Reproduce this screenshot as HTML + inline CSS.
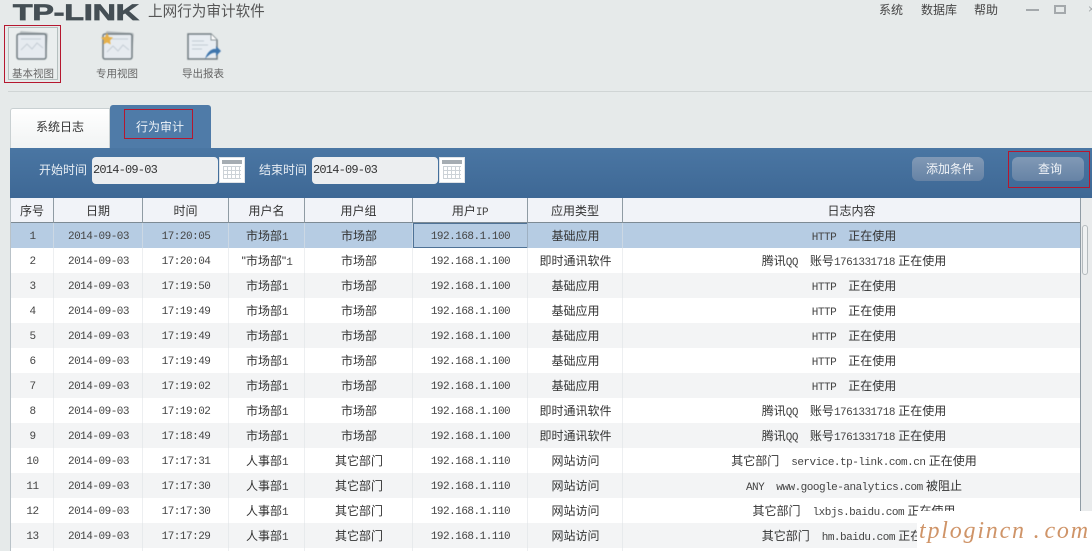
<!DOCTYPE html>
<html lang="zh"><head><meta charset="utf-8">
<style>
html,body{margin:0;padding:0}
body{width:1092px;height:551px;overflow:hidden;background:#e6eaea;position:relative;font-family:"Liberation Sans","Noto Sans CJK SC",sans-serif;font-size:12px;color:#3a3a3a}
.a{position:absolute}
.t{position:absolute;white-space:nowrap;line-height:14px}
.redb{position:absolute;border:1px solid #b5172f;box-sizing:border-box}
.lb{color:#666;font-size:10.500px;text-align:center;width:70px}
table{position:absolute;left:11px;top:198px;width:1069px;border-collapse:separate;border-spacing:0;table-layout:fixed;font-size:12px;background:#fff}
th{height:25px;padding:0;font-weight:400;background:#f1f3f8;border-right:1px solid #8f9ba4;border-bottom:1px solid #7d8a94;color:#333;text-align:center;box-sizing:border-box}
th:last-child{border-right:0}
td{height:25px;padding:0;text-align:center;box-sizing:border-box;white-space:nowrap;overflow:hidden;color:#333}
td.m{padding-top:2px}
td:last-child{padding-left:5px}
tr.g td{background:#f3f4f5}
tr.w td{background:#fff}
tr.s td{background:#b6cce3}
tr.s td.ip{box-shadow:inset 0 0 0 1px #4f7296}
.m{font-family:"Liberation Mono",monospace;font-size:11px;letter-spacing:-.5px;color:#444}
.gap{display:inline-block;width:12px}
.cal{position:absolute;width:26px;height:26px;background:#fff;box-sizing:border-box;border:1px solid #dfe3e7}
.cal i{display:block;position:absolute;left:2px;right:2px;top:2px;height:4px;background:#a6adb3}
.cal b{display:block;position:absolute;left:3px;right:3px;top:8px;bottom:3px;background-image:linear-gradient(#ccd2d7 1px,transparent 1px),linear-gradient(90deg,#ccd2d7 1px,transparent 1px);background-size:4px 4px}
.inp{position:absolute;width:126px;height:27px;border-radius:4px;background:#eceef0;font-family:"Liberation Mono",monospace;font-size:12px;line-height:27px;padding-left:1px;box-sizing:border-box;color:#333;letter-spacing:-.8px}
.btn{position:absolute;width:72px;height:24px;border-radius:6px;background:linear-gradient(#8199b6,#6683a5);color:#f1f4f8;text-align:center;line-height:24px;font-size:12px;box-sizing:border-box}
</style></head><body>

<div class="t" style="left:13px;top:2px;font:900 22px/22px 'Liberation Sans',sans-serif;color:#454f55;-webkit-text-stroke:.8px #454f55;transform:scaleX(1.45);transform-origin:left top">TP-LINK</div>
<div class="t" style="left:148px;top:5px;font-size:14.600px;color:#555">上网行为审计软件</div>

<div class="t" style="left:879px;top:3px;color:#444">系统</div>
<div class="t" style="left:921px;top:3px;color:#444">数据库</div>
<div class="t" style="left:974px;top:3px;color:#444">帮助</div>
<div class="a" style="left:1026px;top:9px;width:13px;height:2px;background:#a4a9ac"></div>
<div class="a" style="left:1054px;top:5px;width:12px;height:9px;border:2px solid #a4a9ac;box-sizing:border-box;background:#e6eaea"></div>
<div class="t" style="left:1088px;top:2px;color:#a4a9ac">×</div>

<div class="redb" style="left:4px;top:25px;width:57px;height:58px"></div>
<div class="a" style="left:8px;top:27px;width:50px;height:53px;border:1px solid #b5c0bf;box-sizing:border-box;background:#eaeeee"></div>

<svg class="a" style="left:0;top:0;filter:blur(.5px)" width="240" height="70">
<g>
<rect x="19" y="32" width="28" height="25" rx="2" fill="#b4babd" transform="rotate(4 33 45)"/>
<rect x="17" y="34" width="29" height="25" rx="2" fill="#e6ebf0" stroke="#727d82" stroke-width="1.500"/>
<path d="M21 50 L27 44 L32 49 L37 43 L43 48" stroke="#c6ced6" fill="none"/>
<path d="M21 39h20" stroke="#c6ced6"/>
</g>
<g>
<rect x="105" y="32" width="28" height="25" rx="2" fill="#b4babd" transform="rotate(4 119 45)"/>
<rect x="103" y="34" width="29" height="25" rx="2" fill="#e6ebf0" stroke="#727d82" stroke-width="1.500"/>
<path d="M107 52 L113 46 L118 51 L123 45 L129 50" stroke="#c6ced6" fill="none"/>
<path d="M112 39h16" stroke="#c6ced6"/>
<path d="M107 33l2 4 4 .5-3 3 .7 4-3.700-2-3.700 2 .7-4-3-3 4-.5z" fill="#e6b04a"/>
</g>
<g>
<path d="M188 34h23l6 6v19h-29z" fill="#e8edf2" stroke="#727d82" stroke-width="1.500"/>
<path d="M211 34v6h6" fill="#fff" stroke="#8f989c"/>
<path d="M192 41h12M192 45h16M192 49h10" stroke="#c3ccd5"/>
<path d="M205 59c2-7 7-11 11-10v-3l5 5-5 5v-3c-4-1-7 2-11 6z" fill="#3f76ad"/>
</g>
</svg>
<div class="t lb" style="left:-2px;top:67px">基本视图</div>
<div class="t lb" style="left:82px;top:67px">专用视图</div>
<div class="t lb" style="left:168px;top:67px">导出报表</div>

<div class="a" style="left:8px;top:91px;width:1084px;height:1px;background:#d0d5d5"></div>

<div class="a" style="left:10px;top:108px;width:100px;height:40px;background:linear-gradient(#fff,#f1f3f3);border:1px solid #c9d0d2;border-bottom:0;box-sizing:border-box;border-radius:3px 0 0 0"></div>
<div class="t" style="left:36px;top:120px;color:#333">系统日志</div>
<div class="a" style="left:110px;top:105px;width:101px;height:44px;background:#4f7ba8;border-radius:3px 3px 0 0"></div>
<div class="redb" style="left:124px;top:109px;width:69px;height:30px"></div>
<div class="t" style="left:136px;top:120px;color:#eef3f8">行为审计</div>

<div class="a" style="left:10px;top:148px;width:1082px;height:50px;background:linear-gradient(#4a76a3,#3e6895)"></div>
<div class="t" style="left:39px;top:163px;color:#e8eef4">开始时间</div>
<div class="inp" style="left:92px;top:157px">2014-09-03</div>
<div class="cal" style="left:219px;top:157px"><i></i><b></b></div>
<div class="t" style="left:259px;top:163px;color:#e8eef4">结束时间</div>
<div class="inp" style="left:312px;top:157px">2014-09-03</div>
<div class="cal" style="left:439px;top:157px"><i></i><b></b></div>
<div class="btn" style="left:912px;top:157px;padding-left:4px">添加条件</div>
<div class="btn" style="left:1012px;top:157px;padding-left:4px">查询</div>
<div class="redb" style="left:1008px;top:151px;width:82px;height:37px"></div>

<div class="a" style="left:10px;top:198px;width:1px;height:353px;background:#b9c2c8"></div>
<div class="a" style="left:11px;top:548px;width:1069px;height:3px;background:#fff"></div>
<table>
<colgroup><col style="width:43px"><col style="width:89px"><col style="width:86px"><col style="width:76px"><col style="width:108px"><col style="width:115px"><col style="width:95px"><col></colgroup>
<tr><th>序号</th><th>日期</th><th>时间</th><th>用户名</th><th>用户组</th><th>用户<span class="m">IP</span></th><th>应用类型</th><th>日志内容</th></tr>
<tr class="s"><td class="m">1</td><td class="m">2014-09-03</td><td class="m">17:20:05</td><td>市场部<span class="m">1</span></td><td>市场部</td><td class="m ip">192.168.1.100</td><td>基础应用</td><td><span class="m">HTTP</span><span class="gap"></span>正在使用</td></tr>
<tr class="w"><td class="m">2</td><td class="m">2014-09-03</td><td class="m">17:20:04</td><td>"市场部"<span class="m">1</span></td><td>市场部</td><td class="m">192.168.1.100</td><td>即时通讯软件</td><td>腾讯<span class="m">QQ</span><span class="gap"></span>账号<span class="m">1761331718</span> 正在使用</td></tr>
<tr class="g"><td class="m">3</td><td class="m">2014-09-03</td><td class="m">17:19:50</td><td>市场部<span class="m">1</span></td><td>市场部</td><td class="m">192.168.1.100</td><td>基础应用</td><td><span class="m">HTTP</span><span class="gap"></span>正在使用</td></tr>
<tr class="w"><td class="m">4</td><td class="m">2014-09-03</td><td class="m">17:19:49</td><td>市场部<span class="m">1</span></td><td>市场部</td><td class="m">192.168.1.100</td><td>基础应用</td><td><span class="m">HTTP</span><span class="gap"></span>正在使用</td></tr>
<tr class="g"><td class="m">5</td><td class="m">2014-09-03</td><td class="m">17:19:49</td><td>市场部<span class="m">1</span></td><td>市场部</td><td class="m">192.168.1.100</td><td>基础应用</td><td><span class="m">HTTP</span><span class="gap"></span>正在使用</td></tr>
<tr class="w"><td class="m">6</td><td class="m">2014-09-03</td><td class="m">17:19:49</td><td>市场部<span class="m">1</span></td><td>市场部</td><td class="m">192.168.1.100</td><td>基础应用</td><td><span class="m">HTTP</span><span class="gap"></span>正在使用</td></tr>
<tr class="g"><td class="m">7</td><td class="m">2014-09-03</td><td class="m">17:19:02</td><td>市场部<span class="m">1</span></td><td>市场部</td><td class="m">192.168.1.100</td><td>基础应用</td><td><span class="m">HTTP</span><span class="gap"></span>正在使用</td></tr>
<tr class="w"><td class="m">8</td><td class="m">2014-09-03</td><td class="m">17:19:02</td><td>市场部<span class="m">1</span></td><td>市场部</td><td class="m">192.168.1.100</td><td>即时通讯软件</td><td>腾讯<span class="m">QQ</span><span class="gap"></span>账号<span class="m">1761331718</span> 正在使用</td></tr>
<tr class="g"><td class="m">9</td><td class="m">2014-09-03</td><td class="m">17:18:49</td><td>市场部<span class="m">1</span></td><td>市场部</td><td class="m">192.168.1.100</td><td>即时通讯软件</td><td>腾讯<span class="m">QQ</span><span class="gap"></span>账号<span class="m">1761331718</span> 正在使用</td></tr>
<tr class="w"><td class="m">10</td><td class="m">2014-09-03</td><td class="m">17:17:31</td><td>人事部<span class="m">1</span></td><td>其它部门</td><td class="m">192.168.1.110</td><td>网站访问</td><td>其它部门<span class="gap"></span><span class="m">service.tp-link.com.cn</span> 正在使用</td></tr>
<tr class="g"><td class="m">11</td><td class="m">2014-09-03</td><td class="m">17:17:30</td><td>人事部<span class="m">1</span></td><td>其它部门</td><td class="m">192.168.1.110</td><td>网站访问</td><td><span class="m">ANY</span><span class="gap"></span><span class="m">www.google-analytics.com</span> 被阻止</td></tr>
<tr class="w"><td class="m">12</td><td class="m">2014-09-03</td><td class="m">17:17:30</td><td>人事部<span class="m">1</span></td><td>其它部门</td><td class="m">192.168.1.110</td><td>网站访问</td><td>其它部门<span class="gap"></span><span class="m">lxbjs.baidu.com</span> 正在使用</td></tr>
<tr class="g"><td class="m">13</td><td class="m">2014-09-03</td><td class="m">17:17:29</td><td>人事部<span class="m">1</span></td><td>其它部门</td><td class="m">192.168.1.110</td><td>网站访问</td><td>其它部门<span class="gap"></span><span class="m">hm.baidu.com</span> 正在使用</td></tr>
</table>

<svg class="a" style="left:0;top:198px" width="1092" height="353">
<path d="M53.500 25V353M142.500 25V353M228.500 25V353M304.500 25V353M412.500 25V353M527.500 25V353M622.500 25V353" stroke="#dfe3e6" opacity=".55"/>
</svg>

<div class="a" style="left:1080px;top:198px;width:12px;height:353px;background:#e9ebec;border-left:1px solid #8f9ba4;box-sizing:border-box"></div>
<div class="a" style="left:1082px;top:225px;width:6px;height:50px;border:1px solid #b4babd;border-radius:4px;box-sizing:border-box;background:#eff1f2"></div>

<div class="a" style="left:917px;top:511px;width:175px;height:40px;background:#fff"></div>
<div class="t" style="left:919px;top:516px;font:italic 24px/30px 'Liberation Serif',serif;color:#cf9468;letter-spacing:1.800px">tplogincn <span style="margin-right:3px">.</span>com</div>
</body></html>
